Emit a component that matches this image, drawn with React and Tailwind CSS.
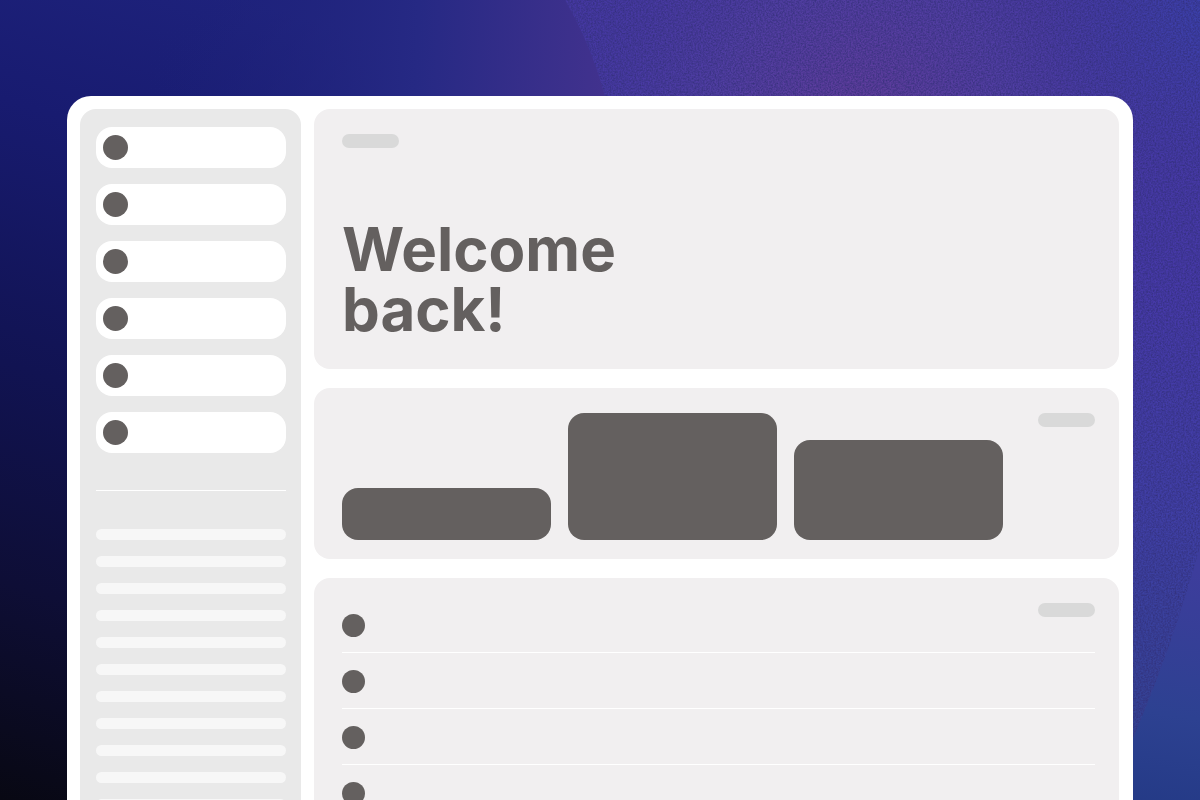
import React from 'react';

const navItems = ['Home', 'Projects', 'Calendar', 'Messages', 'Reports', 'Settings'];
const lines = Array.from({ length: 12 }, (_, i) => i);
const rows = Array.from({ length: 5 }, (_, i) => i);
const stats = [
  { id: 'low', height: 'h-[52px]' },
  { id: 'high', height: 'h-[127px]' },
  { id: 'mid', height: 'h-[100px]' },
];

function Backdrop() {
  return (
    <svg
      className="absolute inset-0 h-full w-full"
      viewBox="0 0 1200 800"
      preserveAspectRatio="xMidYMid slice"
      aria-hidden="true"
    >
      <defs>
        <linearGradient id="night" gradientUnits="userSpaceOnUse" x1="250" y1="0" x2="0" y2="800">
          <stop offset="0" stopColor="#1e227c" />
          <stop offset="0.2" stopColor="#181b70" />
          <stop offset="0.5" stopColor="#111352" />
          <stop offset="0.75" stopColor="#0e0e36" />
          <stop offset="1" stopColor="#080813" />
        </linearGradient>
        <linearGradient id="dusk" gradientUnits="userSpaceOnUse" x1="150" y1="40" x2="610" y2="60">
          <stop offset="0" stopColor="#1c2078" stopOpacity="0" />
          <stop offset="0.58" stopColor="#262984" />
          <stop offset="1" stopColor="#42328e" />
        </linearGradient>
        <linearGradient id="sea" gradientUnits="userSpaceOnUse" x1="1190" y1="570" x2="1150" y2="810">
          <stop offset="0" stopColor="#3d3d9c" />
          <stop offset="0.6" stopColor="#2d4191" />
          <stop offset="1" stopColor="#243a86" />
        </linearGradient>
        <linearGradient id="violet" gradientUnits="userSpaceOnUse" x1="1000" y1="0" x2="1000" y2="740">
          <stop offset="0" stopColor="#4538a2" />
          <stop offset="0.4" stopColor="#4639a8" />
          <stop offset="0.7" stopColor="#403fa6" />
          <stop offset="1" stopColor="#324292" />
        </linearGradient>
        <radialGradient id="plum" gradientUnits="userSpaceOnUse" cx="860" cy="130" r="300">
          <stop offset="0" stopColor="#633c9a" />
          <stop offset="0.5" stopColor="#533fa2" stopOpacity="0.8" />
          <stop offset="1" stopColor="#47399f" stopOpacity="0" />
        </radialGradient>
        <radialGradient id="blue" gradientUnits="userSpaceOnUse" cx="1210" cy="10" r="170">
          <stop offset="0" stopColor="#3a40ab" />
          <stop offset="1" stopColor="#403da6" stopOpacity="0" />
        </radialGradient>
        <clipPath id="wave">
          <path d="M565 0Q592 46 606 100L700 800H1106Q1170 660 1200 546V0Z" />
        </clipPath>
        <filter id="grain" x="0" y="0" width="100%" height="100%" colorInterpolationFilters="sRGB">
          <feTurbulence type="fractalNoise" baseFrequency="0.6" numOctaves="2" seed="4" />
          <feColorMatrix values="0 0 0 0 0.19  0 0 0 0 0.18  0 0 0 0 0.46  1.4 0 0 0 -0.42" />
        </filter>
      </defs>
      <rect width="1200" height="800" fill="url(#night)" />
      <rect width="700" height="130" fill="url(#dusk)" />
      <rect x="1000" y="500" width="200" height="300" fill="url(#sea)" />
      <g clipPath="url(#wave)">
        <rect x="560" width="640" height="800" fill="url(#violet)" />
        <rect x="560" width="640" height="800" fill="url(#plum)" />
        <rect x="560" width="640" height="800" fill="url(#blue)" />
        <rect x="560" width="640" height="800" filter="url(#grain)" />
      </g>
    </svg>
  );
}

function Pill({ className = '' }) {
  return <span className={`block h-3.5 w-[57px] shrink-0 rounded-full bg-[#d9d9d9] ${className}`} />;
}

function Sidebar() {
  return (
    <aside className="w-[221px] shrink-0 rounded-t-2xl bg-[#e9e9e9] pt-[18px] pr-[15px] pl-4">
      <nav className="flex flex-col gap-4">
        {navItems.map((item) => (
          <button
            key={item}
            type="button"
            aria-label={item}
            className="flex h-[41px] w-full items-center rounded-2xl bg-white pl-[7px]"
          >
            <span className="size-[25px] rounded-full bg-[#64605f]" />
          </button>
        ))}
      </nav>

      <hr className="mt-[37px] mb-[38px] border-white" />

      <div className="flex flex-col gap-4">
        {lines.map((line) => (
          <span key={line} className="h-[11px] rounded-full bg-[#f7f7f7]" />
        ))}
      </div>
    </aside>
  );
}

export default function App() {
  return (
    <div className="relative h-screen overflow-hidden bg-[#15186a] font-['Inter',sans-serif]">
      <Backdrop />

      <div className="relative mx-[67px] mt-24 flex min-h-screen gap-[13px] rounded-t-3xl bg-white pt-[13px] pr-3.5 pl-[13px]">
        <Sidebar />

        <main className="flex min-w-0 flex-1 flex-col gap-[19px]">
          {/* Welcome */}
          <section className="h-[260px] rounded-2xl bg-[#f1eff0] px-7 pt-[25px]">
            <Pill />
            <h1 className="mt-[71px] text-[60px] leading-[60px] font-bold text-[#64605f]">
              Welcome
              <br />
              back!
            </h1>
          </section>

          {/* Stats */}
          <section className="flex items-start rounded-2xl bg-[#f1eff0] pt-[25px] pr-6 pb-[19px] pl-7">
            <div className="mr-[35px] flex flex-1 items-end gap-[17px]">
              {stats.map((stat) => (
                <div key={stat.id} className={`flex-1 rounded-2xl bg-[#64605f] ${stat.height}`} />
              ))}
            </div>
            <Pill />
          </section>

          {/* Activity */}
          <section className="relative flex-1 rounded-t-2xl bg-[#f1eff0] pt-[19px] pr-6 pl-7">
            <Pill className="absolute top-[25px] right-6" />
            <ul>
              {rows.map((row) => (
                <li key={row} className="border-b border-white pt-[17px] pb-[15px]">
                  <span className="block size-[23px] rounded-full bg-[#64605f]" />
                </li>
              ))}
            </ul>
          </section>
        </main>
      </div>
    </div>
  );
}
